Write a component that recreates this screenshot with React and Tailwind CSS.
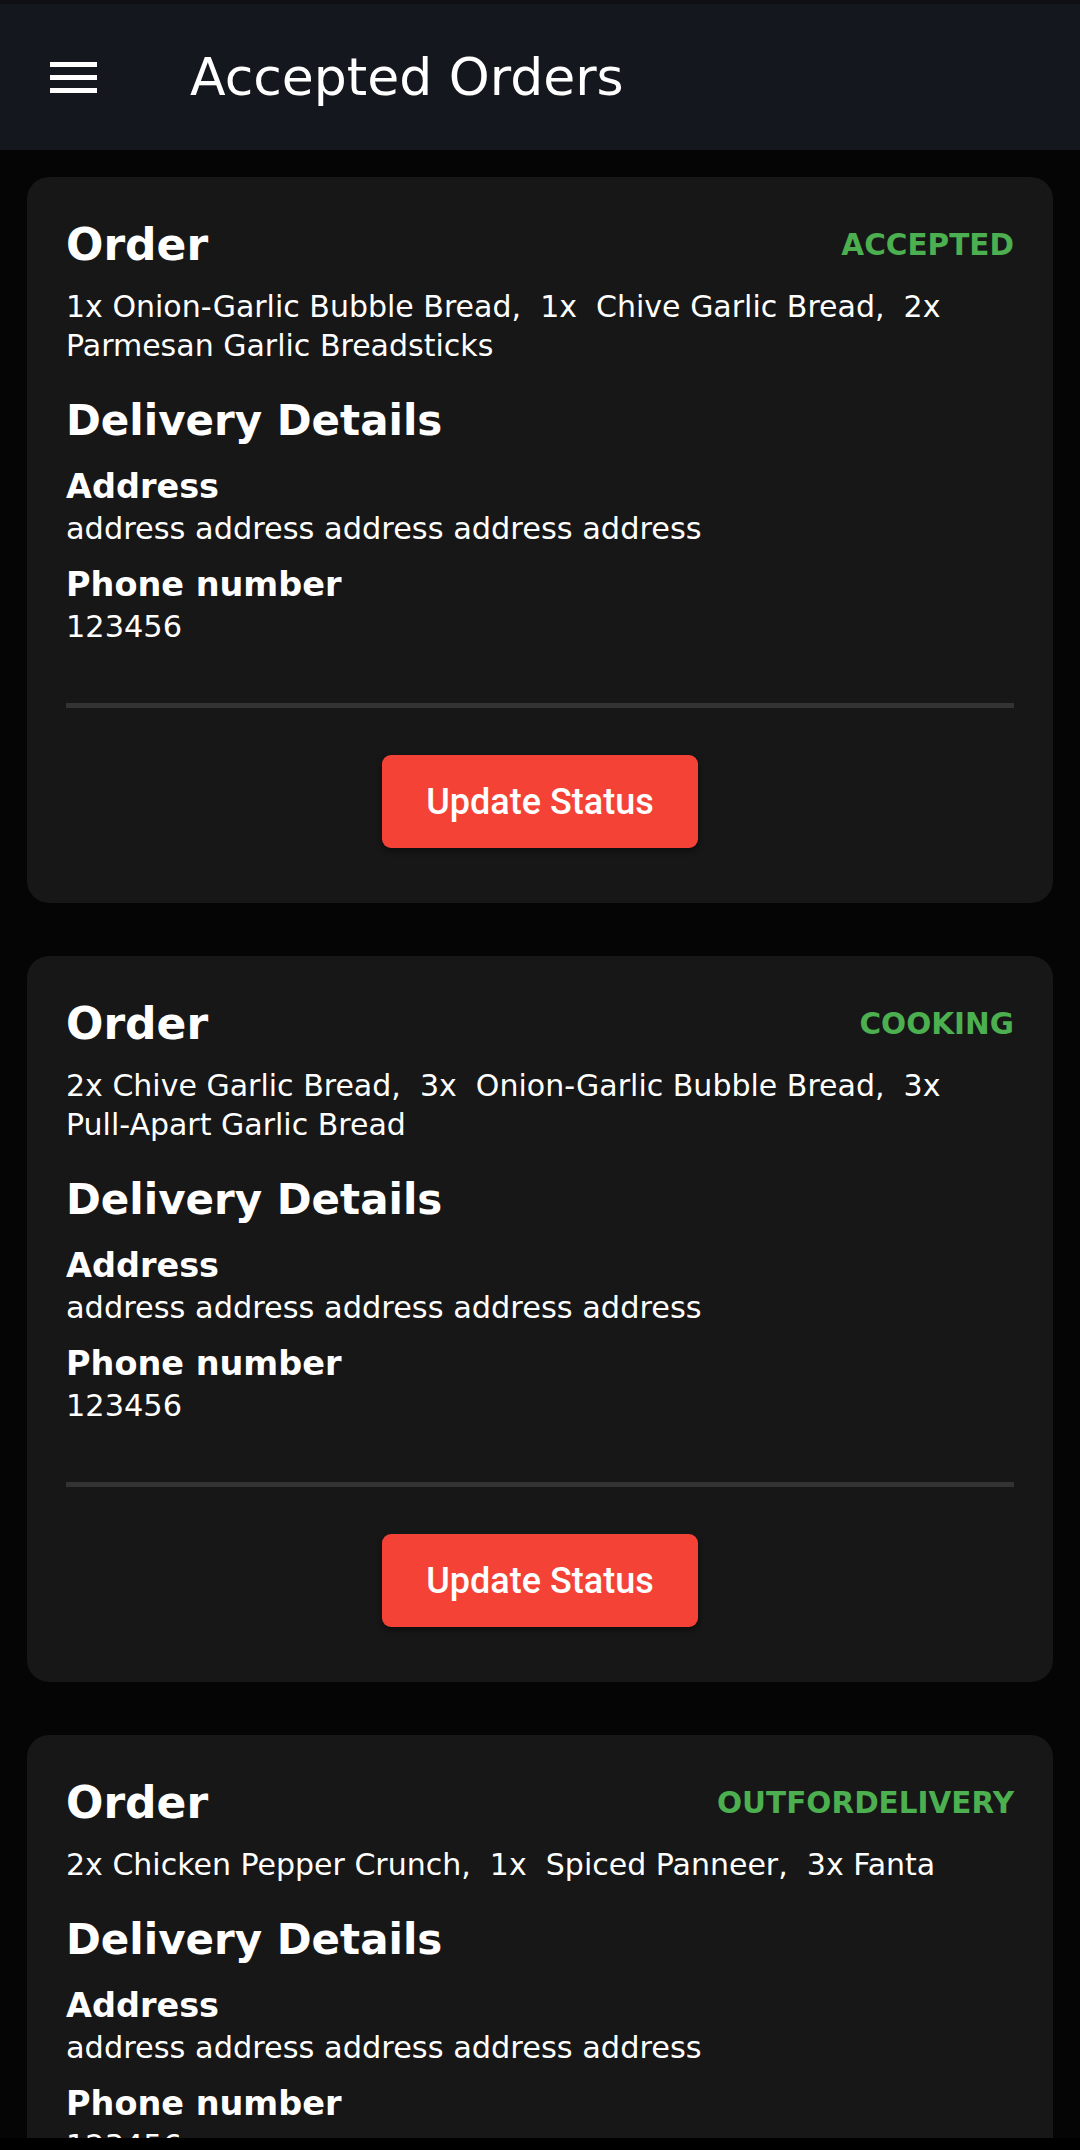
import React from "react";

const orders = [
  {
    status: "ACCEPTED",
    items: ["1x Onion-Garlic Bubble Bread,", "\u00a01x\u00a0 Chive Garlic Bread,", "\u00a02x Parmesan Garlic Breadsticks"],
  },
  {
    status: "COOKING",
    items: ["2x Chive Garlic Bread,", "\u00a03x\u00a0 Onion-Garlic Bubble Bread,", "\u00a03x Pull-Apart Garlic Bread"],
  },
  {
    status: "OUTFORDELIVERY",
    items: ["2x Chicken Pepper Crunch,", "\u00a01x\u00a0 Spiced Panneer,", "\u00a03x Fanta"],
  },
];

const font = { fontFamily: '"DejaVu Sans", sans-serif' };

function Items({ items }) {
  const words = items.join(" ").split(" ");
  return (
    <div className="mt-[16px] text-[30px] leading-[39px] text-white">
      {words.map((w, i) => (
        <React.Fragment key={i}>
          <span className="whitespace-nowrap">{w}</span>
          {i < words.length - 1 ? " " : ""}
        </React.Fragment>
      ))}
    </div>
  );
}

function Card({ order }) {
  return (
    <div className="rounded-[22px] bg-[#171717] px-[39px] pt-[42px] pb-[55px]">
      <div className="flex items-center justify-between">
        <div className="text-[44px] font-bold leading-[52px] text-white">Order</div>
        <div className="text-[29.5px] font-bold leading-[34px] text-[#4caf50]">{order.status}</div>
      </div>
      <Items items={order.items} />
      <div className="mt-[31px] text-[42px] font-bold leading-[50px] text-white">Delivery Details</div>
      <div className="mt-[21px] text-[33.5px] font-bold leading-[40px] text-white">Address</div>
      <div className="mt-[2px] text-[30.4px] leading-[40px] text-white">address address address address address</div>
      <div className="mt-[16px] text-[33.5px] font-bold leading-[40px] text-white">Phone number</div>
      <div className="mt-[2px] text-[30.4px] leading-[40px] text-white">123456</div>
      <div className="mt-[56px] h-[5px] bg-[#333333]" />
      <div className="mt-[47px] flex justify-center">
        <button
          className="flex h-[93px] w-[316px] items-center justify-center rounded-[9px] bg-[#f44336] text-[36px] font-medium text-white shadow-[0_3px_6px_rgba(0,0,0,0.45)]"
          style={{ fontFamily: "Roboto, sans-serif" }}
        >
          Update Status
        </button>
      </div>
    </div>
  );
}

export default function App() {
  return (
    <div className="flex h-[2150px] w-[1080px] flex-col overflow-hidden bg-[#050505]" style={font}>
      <div className="h-[4px] bg-[#0e1013]" />
      <div className="flex h-[146px] shrink-0 items-center bg-[#14171d]">
        <div className="ml-[50px] flex w-[47px] flex-col gap-[8px]">
          <div className="h-[5px] bg-white" />
          <div className="h-[5px] bg-white" />
          <div className="h-[5px] bg-white" />
        </div>
        <div className="ml-[93px] text-[52px] leading-[62px] text-white">Accepted Orders</div>
      </div>
      <div className="flex flex-1 flex-col gap-[53px] overflow-hidden px-[27px] pt-[27px]">
        {orders.map((o, i) => (
          <Card key={i} order={o} />
        ))}
      </div>
      <div className="h-[12px] shrink-0 bg-black" />
    </div>
  );
}
